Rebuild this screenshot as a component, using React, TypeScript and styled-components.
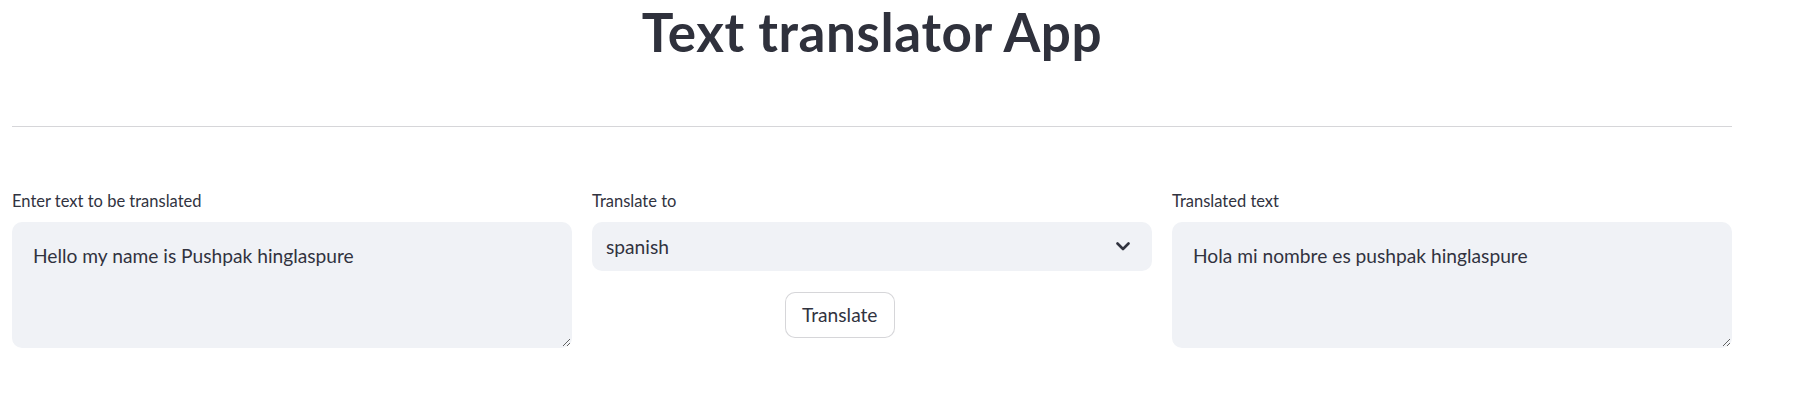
import React from "react";
import styled, { createGlobalStyle } from "styled-components";

const GlobalStyle = createGlobalStyle`
  html, body {
    margin: 0;
    padding: 0;
    background: #ffffff;
  }
  body {
    font-family: Lato, "Noto Sans", sans-serif;
    color: #31333f;
  }
  * { box-sizing: border-box; }
`;

const Page = styled.main`
  width: 1732px;
  padding: 0 0 0 12px;
  display: flex;
  flex-direction: column;
`;

const Title = styled.h1`
  margin: 0;
  height: 64px;
  font-family: Lato, sans-serif;
  font-weight: 700;
  font-size: 53px;
  letter-spacing: 0.6px;
  line-height: 1.2;
  text-align: center;
  color: #2f313c;
`;

const Divider = styled.hr`
  margin: 62px 0 0 0;
  border: none;
  height: 1px;
  background: rgba(49, 51, 63, 0.2);
`;

const Columns = styled.section`
  margin-top: 65px;
  display: grid;
  grid-template-columns: repeat(3, 1fr);
  column-gap: 20px;
`;

const Column = styled.div`
  display: flex;
  flex-direction: column;
  align-items: flex-start;
`;

const Label = styled.label`
  display: block;
  height: 20px;
  margin-bottom: 10px;
  font-size: 16.5px;
  line-height: 1.2;
  color: #31333f;
`;

const TextArea = styled.textarea`
  width: 100%;
  height: 126px;
  padding: 18px 20px;
  border: 1px solid transparent;
  border-radius: 10px;
  background: #f0f2f6;
  color: #31333f;
  font-family: Lato, sans-serif;
  font-size: 19.2px;
  line-height: 1.6;
  resize: vertical;
  outline: none;
`;

const Select = styled.div`
  width: 100%;
  height: 49px;
  padding: 0 22px 0 14px;
  border-radius: 10px;
  background: #f0f2f6;
  display: flex;
  align-items: center;
  justify-content: space-between;
  font-size: 19.2px;
  line-height: 1.2;
  color: #31333f;
`;

const Button = styled.button`
  margin: 21px 0 0 193px;
  height: 46px;
  padding: 0 16px;
  border: 1px solid rgba(49, 51, 63, 0.2);
  border-radius: 10px;
  background: #ffffff;
  color: #31333f;
  font-family: Lato, sans-serif;
  font-size: 19.2px;
  line-height: 1.2;
  cursor: pointer;
`;

const Chevron = () => (
  <svg width="14" height="9" viewBox="0 0 14 9" aria-hidden="true">
    <path d="M1.5 1.5 L7 7 L12.5 1.5" fill="none" stroke="#31333f" strokeWidth="2.6" strokeLinecap="round" strokeLinejoin="round" />
  </svg>
);

export default function App() {
  return (
    <>
      <GlobalStyle />
      <Page>
        <Title>Text translator App</Title>
        <Divider />
        <Columns>
          <Column>
            <Label>Enter text to be translated</Label>
            <TextArea readOnly defaultValue="Hello my name is Pushpak hinglaspure" />
          </Column>
          <Column>
            <Label>Translate to</Label>
            <Select>
              <span>spanish</span>
              <Chevron />
            </Select>
            <Button>Translate</Button>
          </Column>
          <Column>
            <Label>Translated text</Label>
            <TextArea readOnly defaultValue="Hola mi nombre es pushpak hinglaspure" />
          </Column>
        </Columns>
      </Page>
    </>
  );
}
